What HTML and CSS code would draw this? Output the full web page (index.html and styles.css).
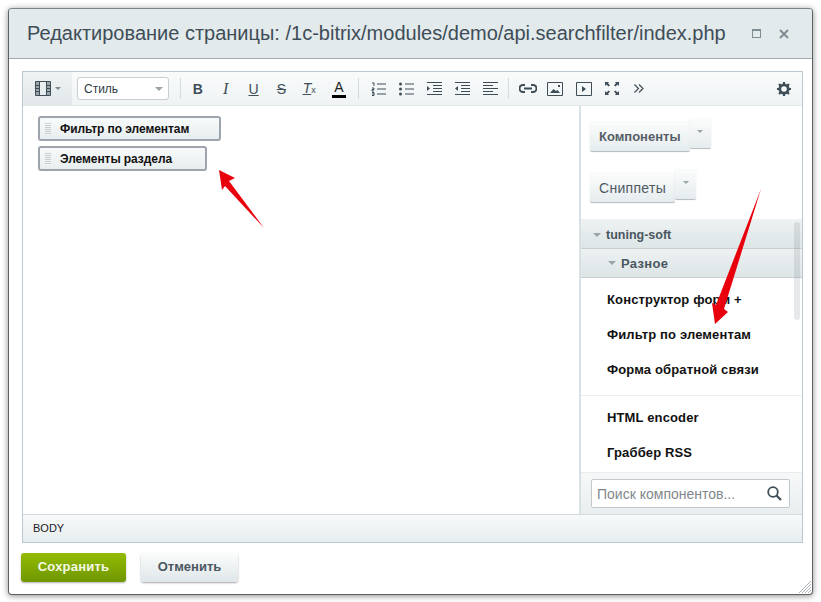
FILE: index.html
```html
<!DOCTYPE html>
<html lang="en">
<head>
  <meta charset="UTF-8">
  <title>Редактирование страницы</title>
  <link rel="stylesheet" href="styles.css">
</head>
<body>
  <div class="dialog">
    <div class="dialog-head">
      <h1>Редактирование страницы: /1c-bitrix/modules/demo/api.searchfilter/index.php</h1>
      <span class="head-max"></span>
      <svg class="head-close" width="10" height="10" viewBox="0 0 10 10"><path d="M1 1l8 8M9 1l-8 8" stroke="#7f8c92" stroke-width="2"/></svg>
    </div>

    <div class="dialog-body">
      <div class="editor">
        <div class="toolbar">
          <div class="view-btn">
            <svg width="16" height="15" viewBox="0 0 16 15"><path d="M.5.500h15v14H.5zM4.500.500v14M11.500.500v14M.5 4.500h4M.5 7.500h4M.5 10.500h4M11.500 4.500h4M11.500 7.500h4M11.500 10.500h4" fill="none" stroke="#3f4d57"/><path d="M1 1h3v13H1zM12 1h3v13h-3z" fill="#3f4d57" opacity=".45"/></svg>
            <i class="caret"></i>
          </div>
          <div class="style-select">Стиль<i class="caret"></i></div>
          <span class="sep"></span>
          <div class="tools tools-text">
            <span class="t-b">B</span>
            <span class="t-i">I</span>
            <span class="t-u">U</span>
            <span class="t-s">S</span>
            <span class="t-x">T<small>x</small></span>
            <span class="t-a">A</span>
          </div>
          <span class="sep sep-a"></span>
          <div class="tools tools-list">
            <svg width="15" height="14" viewBox="0 0 15 14"><path d="M1 1h2v3M1 6h2v1.500H1V9h2M1 10.500h2v3H1M1 12h2M6 2h9M6 7h9M6 12h9" fill="none" stroke="#3f4d57"/></svg>
            <svg width="15" height="14" viewBox="0 0 15 14"><path d="M6 2h9M6 7h9M6 12h9" stroke="#3f4d57"/><circle cx="1.500" cy="2" r="1.500" fill="#3f4d57"/><circle cx="1.500" cy="7" r="1.500" fill="#3f4d57"/><circle cx="1.500" cy="12" r="1.500" fill="#3f4d57"/></svg>
            <svg width="15" height="14" viewBox="0 0 15 14"><path d="M0 .5h15M6 3.500h9M6 6.500h9M6 9.500h9M0 12.500h15" stroke="#3f4d57"/><path d="M0 4l3 2.500L0 9z" fill="#3f4d57"/></svg>
            <svg width="15" height="14" viewBox="0 0 15 14"><path d="M0 .5h15M6 3.500h9M6 6.500h9M6 9.500h9M0 12.500h15" stroke="#3f4d57"/><path d="M3 4L0 6.500 3 9z" fill="#3f4d57"/></svg>
            <svg width="15" height="14" viewBox="0 0 15 14"><path d="M0 .5h15M0 3.500h10M0 6.500h15M0 9.500h10M0 12.500h15" stroke="#3f4d57"/></svg>
          </div>
          <span class="sep sep-b"></span>
          <div class="tools tools-media">
            <svg class="ic-link" width="18" height="9" viewBox="0 0 18 9"><path d="M6 1H4a3.500 3.500 0 000 7h2M12 1h2a3.500 3.500 0 010 7h-2M5 4.500h8" fill="none" stroke="#3f4d57" stroke-width="2"/></svg>
            <svg width="16" height="14" viewBox="0 0 16 14"><path d="M.5.500h15v13H.5z" fill="none" stroke="#3f4d57"/><path d="M3 11l3.500-4 2.500 2 1.500-1 2.500 3z" fill="#3f4d57"/><path d="M11 3h2v2h-2z" fill="#3f4d57"/></svg>
            <svg width="16" height="14" viewBox="0 0 16 14"><path d="M.5.500h15v13H.5z" fill="none" stroke="#3f4d57"/><path d="M6 4l4 3-4 3z" fill="#3f4d57"/></svg>
            <svg width="14" height="13" viewBox="0 0 14 13"><path d="M0 0h4L3 1.200 5 3.200 3.500 4.500 1.500 2.500 0 4zM14 0h-4l1 1.200-2 2 1.500 1.300 2-2L14 4zM0 13h4L3 11.800 5 9.800 3.500 8.500 1.500 10.500 0 9zM14 13h-4l1-1.200-2-2 1.500-1.300 2 2L14 9z" fill="#3f4d57"/></svg>
            <svg class="ic-more" width="10" height="9" viewBox="0 0 10 9"><path d="M.5.500L4.500 4.500.5 8.500M5 .500L9 4.500 5 8.500" fill="none" stroke="#3f4d57" stroke-width="1.200"/></svg>
          </div>
          <svg class="gear" width="14" height="14" viewBox="0 0 14 14"><circle cx="7" cy="7" r="4.200" fill="none" stroke="#3f4d57" stroke-width="2.800"/><path d="M7 0v14M0 7h14M2 2l10 10M12 2L2 12" stroke="#3f4d57" stroke-width="2.200" stroke-dasharray="2.400 9.600 2.400"/></svg>
        </div>

        <div class="work">
          <div class="content">
            <div class="block block-long"><span class="grip"></span>Фильтр по элементам</div>
            <div class="block block-short"><span class="grip"></span>Элементы раздела</div>
          </div>

          <div class="side">
            <div class="side-btn">
              <span class="btn-main">Компоненты</span>
              <span class="btn-more"><i class="caret"></i></span>
            </div>
            <div class="side-btn side-btn-2">
              <span class="btn-main">Сниппеты</span>
              <span class="btn-more"><i class="caret"></i></span>
            </div>
            <div class="tree">
              <div class="tree-head tree-root"><i class="caret"></i>tuning-soft</div>
              <div class="tree-head tree-sub"><i class="caret"></i>Разное</div>
              <div class="tree-list tree-list-first">
                <div class="tree-item">Конструктор форм +</div>
                <div class="tree-item">Фильтр по элементам</div>
                <div class="tree-item">Форма обратной связи</div>
              </div>
              <div class="tree-list">
                <div class="tree-item">HTML encoder</div>
                <div class="tree-item">Граббер RSS</div>
              </div>
              <span class="tree-scroll"></span>
            </div>
            <div class="search-row">
              <div class="search">
                <span>Поиск компонентов...</span>
                <svg width="15" height="15" viewBox="0 0 15 15"><circle cx="6" cy="6" r="4.800" fill="none" stroke="#3f4d57" stroke-width="1.800"/><path d="M9.500 9.500l4.500 4.500" stroke="#3f4d57" stroke-width="2.200"/></svg>
              </div>
            </div>
          </div>
        </div>

        <div class="statusbar">BODY</div>
      </div>

      <div class="actions">
        <button class="btn-save">Сохранить</button>
        <button class="btn-cancel">Отменить</button>
      </div>
    </div>

    <svg class="resize" width="12" height="12" viewBox="0 0 12 12"><path d="M12 0L0 12M12 3L3 12M12 6l-6 6M12 9l-3 3" stroke="#a9b2b6"/></svg>
  </div>

  <svg class="arrows" width="821" height="602" viewBox="0 0 821 602">
    <path d="M219 170l16 8-6 3 35 47-39-42-3 4z" fill="#e8000d"/>
    <path d="M761 189L724 309l4 3-13 12-3-21 4 2z" fill="#e8000d"/>
  </svg>
</body>
</html>
```

FILE: styles.css
```css
html, body {
  margin: 0;
  padding: 0;
  background: #fff;
}
body {
  width: 821px;
  height: 602px;
  overflow: hidden;
  font-family: "Liberation Sans", Arial, sans-serif;
}
.caret {
  display: inline-block;
  width: 0;
  height: 0;
  border-left: 4px solid transparent;
  border-right: 4px solid transparent;
  border-top: 4px solid #9aa3a8;
}

.dialog {
  position: relative;
  box-sizing: border-box;
  width: 805px;
  height: 587px;
  margin: 8px 0 0 8px;
  background: #fff;
  border: 1px solid #5c6163;
  border-top-color: #7d8385;
  border-radius: 4px;
  box-shadow: 0 1px 6px rgba(0, 0, 0, 0.45);
  display: flex;
  flex-direction: column;
}
.dialog-head {
  box-sizing: border-box;
  height: 50px;
  flex: none;
  background: #e2eaec;
  border-bottom: 1px solid #a5abad;
  border-radius: 3px 3px 0 0;
  display: flex;
  align-items: center;
  padding: 0 23px 0 18px;
}
.dialog-head h1 {
  flex: 1;
  margin: 0;
  font-size: 20px;
  font-weight: normal;
  color: #3f4d57;
  white-space: nowrap;
}
.head-max {
  box-sizing: border-box;
  width: 9px;
  height: 9px;
  border: 1px solid #7f8c92;
  border-top-width: 2px;
  margin-right: 18px;
}

.dialog-body {
  flex: 1;
  display: flex;
  flex-direction: column;
  padding: 12px 9px 0 13px;
}
.editor {
  box-sizing: border-box;
  height: 472px;
  border: 1px solid #bcc8cf;
  display: flex;
  flex-direction: column;
}

.toolbar {
  box-sizing: border-box;
  height: 34px;
  flex: none;
  display: flex;
  align-items: center;
  background: linear-gradient(#f9fbfb, #eff3f4);
  border-bottom: 1px solid #e3e8ea;
}
.view-btn {
  box-sizing: border-box;
  width: 49px;
  height: 33px;
  background: linear-gradient(#eef2f3, #e2e8ea);
  display: flex;
  align-items: center;
  padding-left: 12px;
}
.view-btn .caret {
  margin-left: 4px;
  border-width: 3px 3px 0;
  border-top-color: #7f8a90;
}
.style-select {
  box-sizing: border-box;
  width: 92px;
  height: 23px;
  margin-left: 5px;
  background: #fff;
  border: 1px solid #c6cfd3;
  border-radius: 3px;
  display: flex;
  align-items: center;
  justify-content: space-between;
  padding: 0 5px 0 6px;
  font-size: 12px;
  color: #2f3b43;
}
.sep {
  width: 1px;
  height: 21px;
  margin-left: 11px;
  background: #d5dadc;
}
.sep-a { margin-left: 12px; }
.sep-b { margin-left: 10px; }

.tools {
  display: flex;
  align-items: center;
  color: #3f4d57;
}
.tools-text {
  width: 162px;
  margin-left: 3px;
  font-size: 14px;
  line-height: 18px;
}
.tools-text span {
  width: 28px;
  text-align: center;
}
.t-b { font-weight: bold; }
.t-i { font-style: italic; font-family: "Liberation Serif", serif; font-size: 16px; }
.t-u { text-decoration: underline; }
.t-s { text-decoration: line-through; }
.t-x { font-style: italic; text-decoration: underline; }
.t-x small { font-size: 9px; font-style: normal; display: inline-block; text-decoration: none; }
.t-a {
  color: #222;
  border-bottom: 3px solid #000;
  line-height: 15px;
  margin-left: 9px;
  width: 14px !important;
}
.tools-list {
  gap: 13px;
  margin-left: 12px;
}
.tools-media {
  gap: 13px;
  margin-left: 10px;
}
.ic-link { margin-right: -3px; }
.ic-more { margin-left: 2px; }
.gear {
  margin-left: auto;
  margin-right: 11px;
}

.work {
  flex: 1;
  display: flex;
  min-height: 0;
}
.content {
  flex: 1;
  padding: 10px 0 0 15px;
}
.block {
  box-sizing: border-box;
  height: 25px;
  margin-bottom: 5px;
  display: flex;
  align-items: center;
  background: linear-gradient(#f8fafa, #e8eef0);
  border: 2px solid #9ea4ae;
  border-radius: 3px;
  font-size: 12px;
  font-weight: bold;
  letter-spacing: -0.07px;
  color: #111;
}
.block-long { width: 183px; }
.block-short { width: 169px; }
.grip {
  width: 6px;
  height: 11px;
  margin: 0 9px 0 5px;
  background: repeating-linear-gradient(#c8cdd0 0 1px, transparent 1px 2px);
}

.side {
  box-sizing: border-box;
  width: 223px;
  flex: none;
  border-left: 2px solid #d9e1e5;
  display: flex;
  flex-direction: column;
}
.side-btn {
  display: flex;
  align-items: flex-start;
  margin: 13px 0 0 9px;
  height: 34px;
}
.side-btn-2 { margin-top: 17px; height: 34px; }
.btn-main {
  box-sizing: border-box;
  height: 30px;
  margin-top: 3px;
  padding: 0 9px;
  display: flex;
  align-items: center;
  background: linear-gradient(#fbfcfc, #e6ecee);
  border-bottom: 1px solid #b9c0c3;
  border-radius: 2px;
  box-shadow: 0 0 1px #b9c0c3;
  font-size: 13px;
  font-weight: bold;
  color: #555e66;
}
.side-btn-2 .btn-main { font-weight: normal; font-size: 14px; letter-spacing: 0.3px; color: #4f5a63; }
.btn-more {
  box-sizing: border-box;
  width: 21px;
  height: 30px;
  display: flex;
  justify-content: center;
  padding-top: 11px;
  background: linear-gradient(#fbfcfc, #e6ecee);
  border-bottom: 1px solid #b9c0c3;
  border-radius: 2px;
  box-shadow: 0 0 1px #b9c0c3;
}
.btn-more .caret { border-width: 3px 3px 0; }

.tree {
  position: relative;
  flex: 1;
  min-height: 0;
  margin-top: 15px;
  border-top: 1px solid #eef1f2;
}
.tree-head {
  box-sizing: border-box;
  height: 29px;
  display: flex;
  align-items: center;
  background: linear-gradient(#edf1f2, #dde5e7);
  border-bottom: 1px solid #c9d0d3;
  font-size: 12.5px;
  font-weight: bold;
  color: #4a5761;
}
.tree-head .caret {
  border-width: 4px 4px 0;
  margin-right: 5px;
}
.tree-root { padding: 1px 0 0 12px; }
.tree-sub { padding-left: 27px; font-size: 13px; letter-spacing: 0.3px; }
.tree-list {
  padding: 4px 0;
}
.tree-list-first {
  border-bottom: 1px solid #eceff0;
  padding: 4px 0 8px;
}
.tree-item {
  height: 35px;
  padding-left: 26px;
  display: flex;
  align-items: center;
  font-size: 13px;
  letter-spacing: 0.14px;
  font-weight: bold;
  color: #111;
}
.tree-scroll {
  position: absolute;
  top: 2px;
  right: 2px;
  width: 6px;
  height: 98px;
  border-radius: 3px;
  background: rgba(120, 130, 135, 0.18);
}

.search-row {
  box-sizing: border-box;
  height: 42px;
  flex: none;
  padding: 6px 12px 0 10px;
  background: linear-gradient(#f6f8f8, #e9eef0);
  border-top: 1px solid #e9edee;
}
.search {
  box-sizing: border-box;
  height: 29px;
  background: #fff;
  border: 1px solid #c2c9cc;
  border-radius: 2px;
  display: flex;
  align-items: center;
  justify-content: space-between;
  padding: 0 7px 0 5px;
  font-size: 14px;
  color: #7f878b;
}

.statusbar {
  box-sizing: border-box;
  height: 28px;
  flex: none;
  display: flex;
  align-items: center;
  padding: 0 0 2px 10px;
  background: linear-gradient(#f8fafa, #e6ecee);
  border-top: 1px solid #d3dade;
  font-size: 11px;
  color: #222;
}

.actions {
  display: flex;
  gap: 15px;
  margin-top: 10px;
  margin-left: -1px;
}
.actions button {
  box-sizing: border-box;
  height: 29px;
  padding: 0 0 2px;
  border: none;
  border-radius: 3px;
  font-family: inherit;
  font-size: 13px;
  font-weight: bold;
  cursor: pointer;
}
.btn-save {
  width: 105px;
  background: linear-gradient(#93bb03, #6f9600);
  color: #f4f8e6;
  letter-spacing: 0.2px;
  box-shadow: 0 1px 2px rgba(0, 0, 0, 0.3);
}
.btn-cancel {
  width: 97px;
  background: linear-gradient(#fbfcfc, #dfe6e9);
  color: #4a5761;
  box-shadow: 0 1px 2px rgba(0, 0, 0, 0.35);
}

.resize {
  position: absolute;
  right: 1px;
  bottom: 1px;
}
.arrows {
  position: absolute;
  left: 0;
  top: 0;
  pointer-events: none;
}
```
